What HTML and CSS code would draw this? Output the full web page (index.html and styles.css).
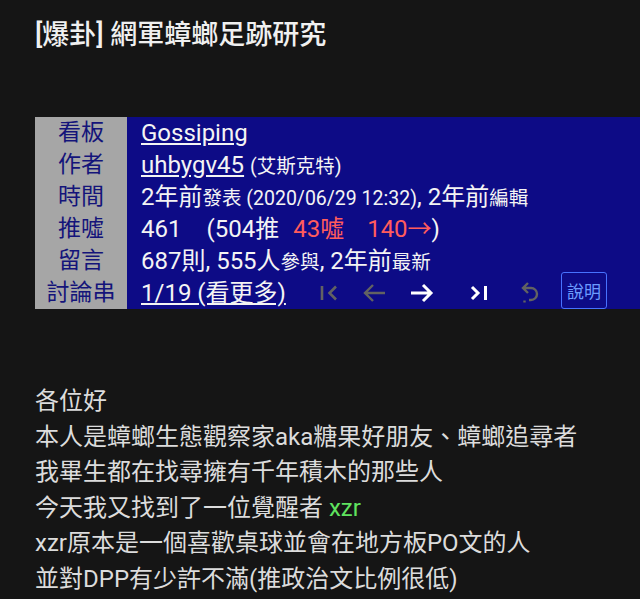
FILE: index.html
```html
<!DOCTYPE html>
<html lang="zh-Hant">
<head>
  <meta charset="UTF-8">
  <meta name="viewport" content="width=device-width, initial-scale=1.0">
  <title>網軍蟑螂足跡研究</title>
  <link rel="stylesheet" href="styles.css">
</head>
<body>
  <div class="article">
    <h1 class="title">[爆卦] 網軍蟑螂足跡研究</h1>

    <!-- Article meta -->
    <div class="meta">
      <div class="meta-label">看板</div>
      <div class="meta-value"><a href="#">Gossiping</a></div>

      <div class="meta-label">作者</div>
      <div class="meta-value"><a href="#">uhbygv45</a> <span class="small">(艾斯克特)</span></div>

      <div class="meta-label">時間</div>
      <div class="meta-value">2年前<span class="small">發表 (2020/06/29 12:32)</span>, 2年前<span class="small">編輯</span></div>

      <div class="meta-label">推噓</div>
      <div class="meta-value">461<span class="push">(504推</span><span class="boo first">43噓</span><span class="boo arrow">140→</span>)</div>

      <div class="meta-label">留言</div>
      <div class="meta-value">687則, 555人<span class="small">參與</span>, 2年前<span class="small">最新</span></div>

      <div class="meta-label">討論串</div>
      <div class="meta-value thread">
        <a href="#">1/19 (看更多)</a>
        <div class="nav">
          <span class="nav-btn off">
            <svg width="18" height="16" viewBox="0 0 18 16"><path d="M2 1v14M16 1.5L9.5 8l6.5 6.5" fill="none" stroke="currentColor" stroke-width="2.6"/></svg>
          </span>
          <span class="nav-btn off">
            <svg width="24" height="20" viewBox="0 0 24 20"><path d="M23 10H3M11 2l-8 8 8 8" fill="none" stroke="currentColor" stroke-width="2.4"/></svg>
          </span>
          <span class="nav-btn">
            <svg width="24" height="20" viewBox="0 0 24 20"><path d="M1 10h20M13 2l8 8-8 8" fill="none" stroke="currentColor" stroke-width="3"/></svg>
          </span>
          <span class="nav-btn last">
            <svg width="18" height="16" viewBox="0 0 18 16"><path d="M2 2l6 6-6 6M15.5 1v14" fill="none" stroke="currentColor" stroke-width="3"/></svg>
          </span>
          <span class="nav-btn off">
            <svg width="20" height="24" viewBox="0 0 20 24"><path d="M8 2L3 7l5 5M3 7h8a6 6 0 0 1 0 12H9M4.5 19.5v2" fill="none" stroke="currentColor" stroke-width="2.4"/></svg>
          </span>
          <button class="help">說明</button>
        </div>
      </div>
    </div>

    <!-- Article body -->
    <div class="content">
      <p>各位好</p>
      <p>本人是蟑螂生態觀察家aka糖果好朋友、蟑螂追尋者</p>
      <p>我畢生都在找尋擁有千年積木的那些人</p>
      <p>今天我又找到了一位覺醒者 <span class="hl">xzr</span></p>
      <p>xzr原本是一個喜歡桌球並會在地方板PO文的人</p>
      <p>並對DPP有少許不滿(推政治文比例很低)</p>
    </div>
  </div>
</body>
</html>
```

FILE: styles.css
```css
/* dark reader page */
body {
  margin: 0;
  padding: 0;
  background-color: #151515;
  color: #e2e2e2;
  font-family: Roboto, "Noto Sans CJK TC", sans-serif;
  overflow: hidden;
}

.article {
  padding-left: 35px;
}

.title {
  margin: 0;
  padding-top: 17px;
  font-size: 27px;
  font-weight: 500;
  line-height: 36px;
  color: #f0f0f0;
}

.meta {
  margin-top: 64px;
  display: grid;
  grid-template-columns: 92px 1fr;
  grid-auto-rows: 32px;
  background-color: #0d0b86;
  font-size: 24px;
}

.meta-label {
  background-color: #a6a6a6;
  color: #14147a;
  text-align: center;
  line-height: 32px;
  font-size: 23px;
}

.meta-value {
  padding-left: 14px;
  line-height: 32px;
  color: #f4f4f4;
  white-space: nowrap;
}

.meta-value a {
  color: #f4f4f4;
}

.small {
  font-size: 19.5px;
}

.push {
  margin-left: 25px;
}

.boo {
  color: #ff5c5c;
}

.boo.first {
  margin-left: 14px;
}

.boo.arrow {
  margin-left: 23px;
}

.thread {
  display: flex;
  align-items: center;
}

.nav {
  display: flex;
  align-items: center;
  align-self: stretch;
  margin-left: 34px;
  gap: 24px;
}

.nav-btn {
  display: flex;
  color: #ffffff;
}

.nav-btn.off {
  color: #626262;
}

.nav-btn.last {
  margin-left: 12px;
  margin-right: 8px;
}

.help {
  align-self: flex-end;
  margin-left: -3px;
  padding: 0 5px;
  height: 37px;
  font-family: inherit;
  font-size: 17px;
  color: #6c9cff;
  background: transparent;
  border: 1px solid #4772ff;
  border-radius: 3px;
  cursor: pointer;
}

.content {
  margin-top: 75px;
  font-size: 24px;
  line-height: 35.6px;
  color: #dcdcdc;
}

.content p {
  margin: 0;
}

.hl {
  color: #5fe35f;
}
```
